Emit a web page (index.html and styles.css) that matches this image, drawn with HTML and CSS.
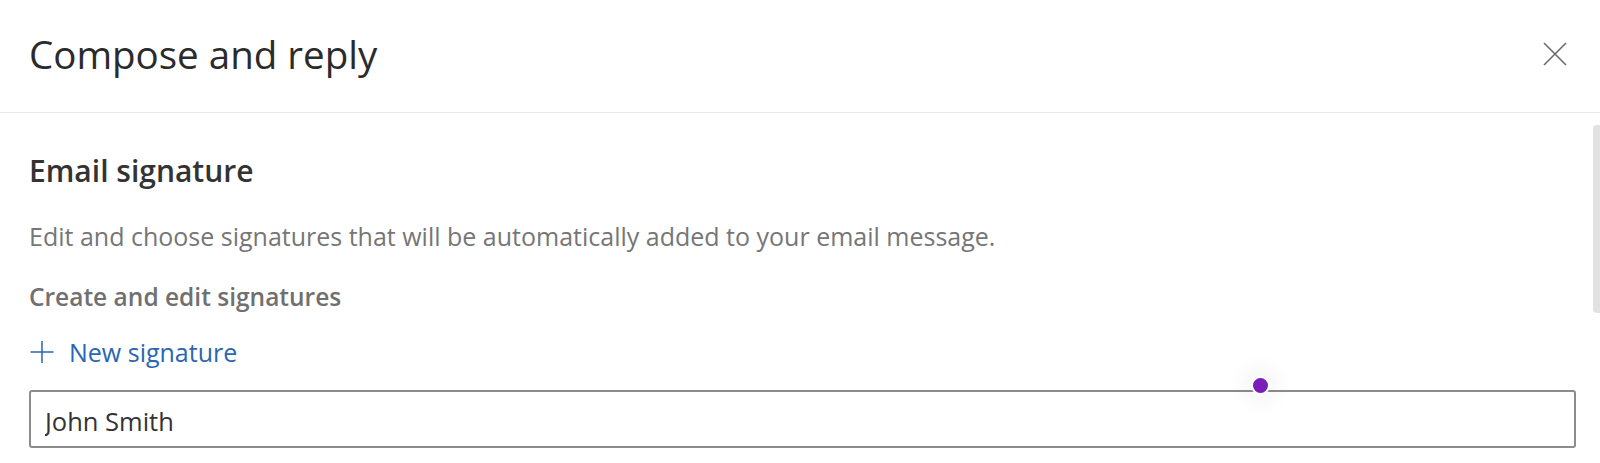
FILE: index.html
```html
<!DOCTYPE html>
<html lang="en">
<head>
<meta charset="utf-8">
<title>Compose and reply</title>
<link rel="stylesheet" href="styles.css">
</head>
<body>
  <div class="panel">
    <header class="panel-header">
      <h1 class="panel-title">Compose and reply</h1>
      <button class="close" aria-label="Close">
        <svg width="24" height="24" viewBox="0 0 24 24"><path d="M1 1 L23 23 M23 1 L1 23" stroke="#6b6b6b" stroke-width="1.6" fill="none"/></svg>
      </button>
    </header>
    <div class="panel-body">
      <h2 class="section-title">Email signature</h2>
      <p class="section-desc">Edit and choose signatures that will be automatically added to your email message.</p>
      <h3 class="group-label">Create and edit signatures</h3>
      <a class="new-sig" href="#">
        <svg width="24" height="22" viewBox="0 0 24 22"><path d="M12 0 V22 M0.5 11 H23.5" stroke="#2a66b3" stroke-width="1.5" fill="none"/></svg>
        <span>New signature</span>
      </a>
      <input class="sig-name" type="text" value="John Smith">
    </div>
    <div class="scrollbar"></div>
    <div class="cursor-dot"></div>
  </div>
</body>
</html>
```

FILE: styles.css
```css
body { margin: 0; background: #fff; font-family: "Open Sans", "Noto Sans", sans-serif; color: #333; }
.panel { position: relative; height: 463px; overflow: hidden; }

.panel-header { box-sizing: border-box; height: 113px; padding: 0 33px 4px 29px; display: flex; align-items: center; justify-content: space-between; border-bottom: 1px solid #e9e9e9; }
.panel-title { margin: 0; font-size: 38.5px; font-weight: 400; line-height: 50px; color: #2b2b2b; }
.close { background: none; border: 0; padding: 0; width: 24px; height: 24px; display: flex; }

.panel-body { padding: 38px 24px 0 29px; }
.section-title { margin: 0; font-size: 30px; font-weight: 600; line-height: 40px; color: #333; }
.section-desc { margin: 27px 0 0; font-size: 25px; line-height: 36px; color: #767676; }
.group-label { margin: 26px 0 0; font-size: 24.5px; font-weight: 600; line-height: 34px; color: #707070; }
.new-sig { margin-top: 20px; display: flex; align-items: center; gap: 15px; font-size: 25px; line-height: 36px; color: #2a66b3; text-decoration: none; }
.new-sig svg { margin-left: 1px; }

.sig-name { display: block; box-sizing: border-box; margin-top: 20px; width: 1547px; height: 58px; padding: 4px 14px 0; border: 2px solid #8c8c8c; border-radius: 3px; font-family: inherit; font-size: 25.5px; color: #333; outline: none; }

.scrollbar { position: absolute; right: 0; top: 125px; width: 7px; height: 188px; background: #e2e2e2; border-radius: 4px 0 0 4px; }
.cursor-dot { position: absolute; left: 1251px; top: 376px; width: 15px; height: 15px; border: 2px solid #fff; border-radius: 50%; background: #7a1db9; box-shadow: 0 0 18px 10px rgba(0,0,0,0.035); }
```
